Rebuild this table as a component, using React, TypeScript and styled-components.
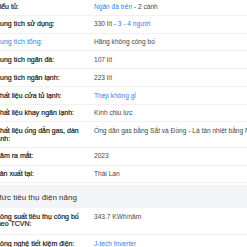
import React from 'react';
import styled, { createGlobalStyle } from 'styled-components';

const GlobalStyle = createGlobalStyle`
  html, body {
    margin: 0;
    padding: 0;
    background: #fff;
    overflow: hidden;
  }
  body {
    font-family: 'Liberation Sans', Arial, sans-serif;
  }
`;

const Table = styled.div`
  width: 380px;
  margin: -2px 0 0 -5px;
  font-size: 7px;
  color: #333;
`;

const Row = styled.div<{ tall?: boolean }>`
  display: flex;
  padding: 4.65px 0 ${props => (props.tall ? '6px' : '4.65px')};
  border-bottom: 1px solid #f1f1f1;
  line-height: 7.5px;
`;

const Label = styled.div<{ link?: boolean }>`
  flex: 0 0 88px;
  margin-right: 11px;
  color: ${props => (props.link ? '#2f80ed' : '#222')};
  -webkit-text-stroke: ${props => (props.link ? '0' : '0.2px')};
`;

const Value = styled.div`
  flex: 1;
  font-size: 6.6px;
  color: #474747;
  white-space: nowrap;
`;

const Link = styled.span`
  color: #2f80ed;
`;

const Section = styled.div`
  background: #f3f4f7;
  height: 23px;
  margin-top: 2px;
  display: flex;
  align-items: center;
  font-size: 8px;
  color: #333;
  padding-top: 1px;
  box-sizing: border-box;
`;

const App = () => (
  <>
    <GlobalStyle />
    <Table>
      <Row>
        <Label>Kiểu tủ:</Label>
        <Value><Link>Ngăn đá trên</Link> - 2 cánh</Value>
      </Row>
      <Row>
        <Label>Dung tích sử dụng:</Label>
        <Value>330 lít - <Link>3 - 4 người</Link></Value>
      </Row>
      <Row>
        <Label link>Dung tích tổng:</Label>
        <Value>Hãng không công bố</Value>
      </Row>
      <Row>
        <Label>Dung tích ngăn đá:</Label>
        <Value>107 lít</Value>
      </Row>
      <Row>
        <Label>Dung tích ngăn lạnh:</Label>
        <Value>223 lít</Value>
      </Row>
      <Row>
        <Label>Chất liệu cửa tủ lạnh:</Label>
        <Value><Link>Thép không gỉ</Link></Value>
      </Row>
      <Row>
        <Label>Chất liệu khay ngăn lạnh:</Label>
        <Value>Kính chịu lực</Value>
      </Row>
      <Row>
        <Label>Chất liệu ống dẫn gas, dàn lạnh:</Label>
        <Value>Ống dẫn gas bằng Sắt và Đồng - Lá tản nhiệt bằng Nhôm</Value>
      </Row>
      <Row>
        <Label>Năm ra mắt:</Label>
        <Value>2023</Value>
      </Row>
      <Row>
        <Label>Sản xuất tại:</Label>
        <Value>Thái Lan</Value>
      </Row>
      <Section>Mức tiêu thụ điện năng</Section>
      <Row tall>
        <Label>Công suất tiêu thụ công bố theo TCVN:</Label>
        <Value>343.7 KWh/năm</Value>
      </Row>
      <Row>
        <Label>Công nghệ tiết kiệm điện:</Label>
        <Value><Link>J-tech Inverter</Link></Value>
      </Row>
    </Table>
  </>
);

export default App;
